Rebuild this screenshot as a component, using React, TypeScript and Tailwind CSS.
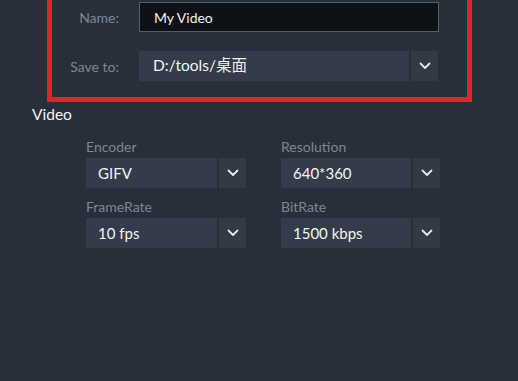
import React from 'react';

const Chevron: React.FC = () => (
    <svg width="12" height="8" viewBox="0 0 12 8" fill="none">
        <path d="M1.5 1.5 L6 6 L10.5 1.5" stroke="#e6e9ee" strokeWidth="1.8" strokeLinecap="round" strokeLinejoin="round" />
    </svg>
);

const Select: React.FC<{ value: string; main: string; btn: string; text?: string }> = ({ value, main, btn, text = 'text-[15px]' }) => (
    <div className="flex h-[30px] gap-[2px]">
        <div className={`flex items-center bg-[#333c48] pl-3 text-[#f2f4f6] ${main} ${text}`}>{value}</div>
        <div className={`flex items-center justify-center bg-[#313a45] ${btn}`}>
            <Chevron />
        </div>
    </div>
);

const Field: React.FC<{ label: string; value: string }> = ({ label, value }) => (
    <div className="flex flex-col">
        <div className="h-[30px] flex items-end pb-[1px] text-[14px] text-[#7c8794]">{label}</div>
        <Select value={value} main="w-[131px]" btn="w-[27px]" />
    </div>
);

export default function App() {
    return (
        <div
            className="h-[381px] w-[518px] overflow-hidden bg-[#272f3a]"
            style={{ fontFamily: 'Lato, "Noto Sans CJK SC", sans-serif' }}
        >
            {/* export target box, top is scrolled off */}
            <div className="-mt-[22px] ml-[47px] w-[425px] border-[5px] border-[#e3222b] pt-[19px] pb-[16px]">
                <div className="flex items-center">
                    <div className="w-[67px] text-right text-[14px] text-[#7c8794]">Name:</div>
                    <div className="ml-[20px] flex h-[30px] w-[300px] items-center border border-[#56606b] bg-[#0e1116] pl-[14px] text-[14px] text-[#eef0f3]">
                        My Video
                    </div>
                </div>
                <div className="mt-[19px] flex items-center">
                    <div className="w-[67px] text-right text-[14px] text-[#7c8794]">Save to:</div>
                    <div className="ml-[20px]">
                        <Select value="D:/tools/桌面" main="w-[270px] pl-[14px]" btn="w-[27px]" text="text-[15.5px]" />
                    </div>
                </div>
            </div>

            <div className="ml-[32px] mt-[1px] text-[15.5px] text-[#f2f4f6]">Video</div>

            <div className="ml-[86px] mt-[2px] grid w-[354px] grid-cols-[195px_159px]">
                <Field label="Encoder" value="GIFV" />
                <Field label="Resolution" value="640*360" />
                <Field label="FrameRate" value="10 fps" />
                <Field label="BitRate" value="1500 kbps" />
            </div>
        </div>
    );
}
